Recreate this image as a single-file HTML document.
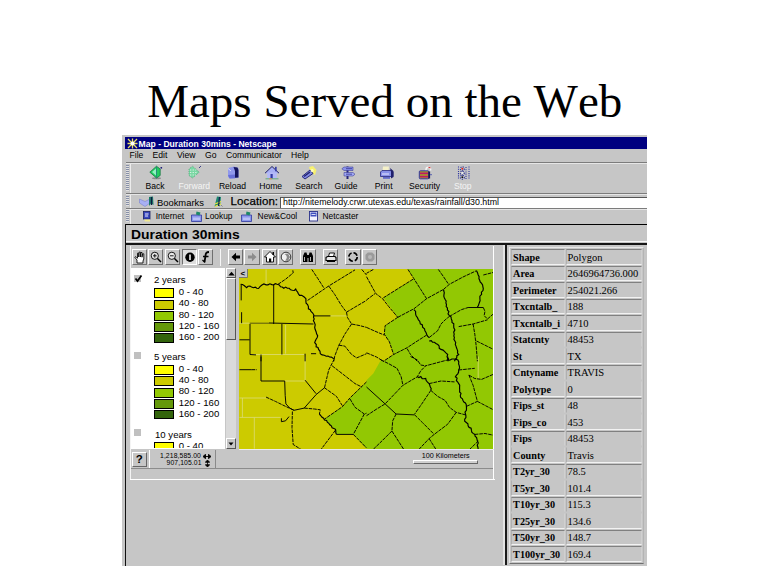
<!DOCTYPE html>
<html>
<head>
<meta charset="utf-8">
<title>Maps Served on the Web</title>
<style>
html,body{margin:0;padding:0;background:#fff;}
body{width:768px;height:576px;position:relative;overflow:hidden;font-family:"Liberation Sans",sans-serif;color:#000;}
body *{position:absolute;box-sizing:border-box;}
.t{white-space:nowrap;line-height:1;}
#title{left:147.2px;top:74.3px;font:47.0px "Liberation Serif",serif;font-kerning:none;}
.g{background:#c6c6c6;}
.menu{top:151px;font-size:8.6px;}
.tb{top:182px;font-size:8.6px;transform:translateX(-50%);}
.pt{top:212.2px;font-size:8.4px;}
.ln{height:1px;left:126px;width:521px;}
.btn{width:15.4px;height:16.2px;top:249.3px;background:#c6c6c6;border-top:1px solid #fff;border-left:1px solid #fff;border-bottom:1px solid #707070;border-right:1px solid #707070;}
.btn svg{left:0;top:0;}
.sw{left:153.9px;width:20.4px;height:10px;border:1px solid #000;}
.lg{left:178.7px;font-size:9.6px;}
.cb{left:134px;width:7.2px;height:7px;background:#c0c0c0;}
table{left:509.3px;top:247.4px;width:133.6px;table-layout:fixed;border-collapse:separate;border-spacing:1px;border-top:1px solid #e8e8e8;border-left:1px solid #e8e8e8;border-bottom:1px solid #707070;border-right:1px solid #b4b4b4;font:10.2px "Liberation Serif",serif;}
tbody,tr,td,th{position:static !important;}
td,th{height:15.5px;padding:0 0 0 0.8px;line-height:13px;text-align:left;white-space:nowrap;border-top:1px solid #808080;border-left:1px solid #b0b0b0;border-bottom:1px solid #f2f2f2;border-right:1px solid #d0d0d0;overflow:hidden;}
tr.nb td,tr.nb th{border-bottom-color:#c6c6c6;}
tr.nt td,tr.nt th{border-top-color:#c6c6c6;}
th{width:54px;font-weight:bold;}
td{width:75.6px;font-size:10.5px;padding-left:0.2px;}
</style>
</head>
<body>
<div id="title" class="t">Maps Served on the Web</div>

<!-- window chrome -->
<div class="g" style="left:122px;top:135.2px;width:525px;height:430.6px;"></div>
<div style="left:124.8px;top:224px;width:1.4px;height:341.8px;background:#101010;"></div>
<div style="left:124.9px;top:137px;width:522.1px;height:12px;background:#000080;"></div>
<div style="left:129.7px;top:163px;width:1px;height:61px;background:#ececec;"></div>
<svg style="left:126.5px;top:137.5px" width="11" height="11" viewBox="0 0 11 11"><path d="M1,1L10,10M10,1L1,10M5.5,0.5V10.5M0.5,5.5H10.500" stroke="#e8e060" stroke-width="1.3"/><circle cx="5.500" cy="5.5" r="2" fill="#fff"/></svg>
<span class="t" style="left:138.6px;top:139px;font:bold 8.6px 'Liberation Sans',sans-serif;color:#fff;">Map - Duration 30mins - Netscape</span>

<span class="t menu" style="left:129.5px">File</span>
<span class="t menu" style="left:152.5px">Edit</span>
<span class="t menu" style="left:177px">View</span>
<span class="t menu" style="left:205px">Go</span>
<span class="t menu" style="left:226px">Communicator</span>
<span class="t menu" style="left:291px">Help</span>
<div class="ln" style="top:162px;background:#7c7c7c"></div>
<div class="ln" style="top:163px;background:#e6e6e6"></div>

<!-- grips -->
<div style="left:126px;top:165px;width:3px;height:26px;background:repeating-linear-gradient(#8890a8 0 1px,#e0e0e0 1px 2px);"></div>
<div style="left:126px;top:196px;width:3px;height:10px;background:repeating-linear-gradient(#8890a8 0 1px,#e0e0e0 1px 2px);"></div>
<div style="left:126px;top:210px;width:3px;height:12px;background:repeating-linear-gradient(#8890a8 0 1px,#e0e0e0 1px 2px);"></div>

<!-- toolbar icons -->
<svg style="left:148px;top:165px" width="330" height="16" viewBox="0 0 330 16">
  <!-- back -->
  <ellipse cx="8.500" cy="13.300" rx="4.500" ry="1" fill="#8a8a8a"/>
  <path d="M1.800,7.200L8.500,1.200L12.200,4V10.500L8.500,13Z" fill="#22cc60" stroke="#0c7038" stroke-width="0.700"/><path d="M4,7L8.500,3V11Z" fill="#90f0c0"/><path d="M8.500,1.500V13" stroke="#208878" stroke-width="0.900"/><rect x="12.500" y="2" width="1.600" height="1.600" fill="#202078"/>
  <!-- forward -->
  <g transform="translate(39,0)"><path d="M12.200,7.200L5.500,1.200L2,4V10.500L5.500,13Z" fill="#7ad8a4" stroke="#48a070" stroke-width="0.700" stroke-dasharray="1.200 1"/><path d="M3,5H9M3,7.500H10M3,10H9" stroke="#d8f0e0" stroke-width="1.100" stroke-dasharray="1.300 1.300"/><path d="M12,3L14,1" stroke="#303080" stroke-width="0.900"/></g>
  <!-- reload -->
  <g transform="translate(78,0)"><path d="M2,3L8,1.500L12.500,3V13L4,13.500L2,12Z" fill="#9098ec"/><path d="M7.500,2L11.500,2.500L12.500,5V12.500L9,12.800V6Z" fill="#14145c"/><path d="M2,10L9,9.500V13.300L3.500,13.500Z" fill="#6870d8"/><path d="M2,3.500L5,6" stroke="#d8dcff" stroke-width="1"/></g>
  <!-- home -->
  <g transform="translate(116,0)"><path d="M1,8.200L8,1.500L15,8.200" fill="#a8b0f4" stroke="#202060" stroke-width="1"/><rect x="3.200" y="7.500" width="9.600" height="6" fill="#b4baf8"/><rect x="6.500" y="9" width="2.200" height="4.500" fill="#3038a0"/><rect x="11" y="1.800" width="1.700" height="4.500" fill="#3840a8"/><path d="M1.500,13.800H14.500" stroke="#58a878" stroke-width="0.900"/><path d="M5,13.800H8" stroke="#e89050" stroke-width="0.900"/></g>
  <!-- search -->
  <g transform="translate(153,0)"><path d="M8,2L12,1L15.500,5L14,10L10,8Z" fill="#f6f070"/><path d="M1,11.500L9,5L12,8.500L4,14Z" fill="#8088e4" stroke="#1c1c70" stroke-width="0.900"/><path d="M3,11.500L9,7" stroke="#20206c" stroke-width="1.300"/><circle cx="11.200" cy="5.500" r="1.500" fill="#fffcc0"/></g>
  <!-- guide -->
  <g transform="translate(192,0)"><rect x="6.500" y="1.500" width="2" height="12.500" fill="#242478"/><path d="M4,2H13V5.500H4L1.800,3.800Z" fill="#8c94ec" stroke="#2c2c88" stroke-width="0.500"/><path d="M13,7.500H4V11H13L15,9.200Z" fill="#a0a8f4" stroke="#2c2c88" stroke-width="0.500"/><path d="M6,3.700H12M6,9.200H12" stroke="#303090" stroke-width="0.800"/></g>
  <!-- print -->
  <g transform="translate(231,0)"><path d="M4,1.500H10L9.500,6H3.500Z" fill="#f4f0c8"/><path d="M1.500,7L3,5.500H12L14,7V11.500H1.500Z" fill="#8890e8" stroke="#24247c" stroke-width="0.800"/><path d="M11,3L14.500,6V12L12,13.500V7Z" fill="#20206c"/><path d="M3,9H10" stroke="#e8eaff" stroke-width="1"/><path d="M4,12H11V13.800H4Z" fill="#6068c8"/></g>
  <!-- security -->
  <g transform="translate(270,0)"><path d="M8,7V4.500A2.300,2.300 0 0 1 12.600,4.500V5.500" fill="none" stroke="#f4f4f4" stroke-width="1.500"/><path d="M10.500,2.300L12.500,3" stroke="#d03030" stroke-width="1.100"/><rect x="1.300" y="5.800" width="9.500" height="8" rx="1" fill="#a0a028" stroke="#2828a8" stroke-width="0.900"/><rect x="2" y="7.500" width="8" height="1.700" fill="#c01868"/><rect x="2" y="10.800" width="8" height="1.700" fill="#c01868"/><rect x="10.300" y="6.500" width="1.800" height="7" fill="#181850"/><rect x="12" y="9.200" width="2" height="1" fill="#5860b0"/></g>
  <!-- stop -->
  <g transform="translate(309,0)"><g stroke-dasharray="1.100 1.100" fill="none" stroke-width="1.100"><path d="M1.500,1.500V14.500M12,1.500V14.500M9,2V14" stroke="#3038a0"/><circle cx="5.300" cy="3.800" r="2" stroke="#283090"/><circle cx="5.300" cy="8" r="2" stroke="#283090"/><circle cx="5.300" cy="12.200" r="2" stroke="#283090"/></g><circle cx="5.300" cy="3.800" r="1" fill="#e02020"/><circle cx="5.300" cy="8" r="0.900" fill="#f0f0f0"/><circle cx="5.300" cy="12.200" r="0.900" fill="#101010"/></g>
</svg>
<span class="t tb" style="left:155px">Back</span>
<span class="t tb" style="left:194.3px;color:#f4f4f4">Forward</span>
<span class="t tb" style="left:232.500px">Reload</span>
<span class="t tb" style="left:270.700px">Home</span>
<span class="t tb" style="left:308.800px">Search</span>
<span class="t tb" style="left:346px">Guide</span>
<span class="t tb" style="left:383.700px">Print</span>
<span class="t tb" style="left:424.600px">Security</span>
<span class="t tb" style="left:462.800px;color:#f4f4f4">Stop</span>
<div class="ln" style="top:193px;background:#7c7c7c"></div>
<div class="ln" style="top:194px;background:#e6e6e6"></div>

<!-- location bar -->
<svg style="left:138.500px;top:195.500px" width="17" height="12" viewBox="0 0 17 12"><path d="M0.500,3L6,5.500L11,3V7L6,10.500L0.500,7Z" fill="#a8b0f4" stroke="#7078c8" stroke-width="0.500"/><path d="M10,1L14,0.500L14.500,9L12,7.500L10,10Z" fill="#1c7868"/><path d="M12.500,1V9" stroke="#101840" stroke-width="1.200"/></svg>
<span class="t" style="left:157px;top:197.5px;font-size:9.4px">Bookmarks</span>
<svg style="left:213px;top:195.500px" width="11" height="12" viewBox="0 0 11 12"><path d="M4,0.500L8,1L7,10.500L4.500,9L1.500,10.500Z" fill="#1c8870"/><path d="M2,8L8,5.500M2,10.500L8,8" stroke="#f0e838" stroke-width="1.300"/><path d="M6.500,1L5.500,10" stroke="#182050" stroke-width="1.200"/><path d="M8,9L9.500,10.500" stroke="#888" stroke-width="1"/></svg>
<span class="t" style="left:230.6px;top:195.6px;font-size:11.5px;letter-spacing:0.1px;-webkit-text-stroke:0.25px #000">Location:</span>
<div style="left:279.5px;top:196.5px;width:367.5px;height:11px;background:#fff;border-top:1px solid #555;border-left:1px solid #555;"></div>
<span class="t" style="left:283px;top:198px;font-size:8.800px">http://nitemelody.crwr.utexas.edu/texas/rainfall/d30.html</span>
<div class="ln" style="top:207.500px;background:#7c7c7c"></div>
<div class="ln" style="top:208.500px;background:#e6e6e6"></div>

<!-- personal toolbar -->
<svg style="left:142.500px;top:211px" width="8" height="11" viewBox="0 0 8 11"><rect x="0.500" y="0.500" width="6.500" height="7.500" fill="#3848c0" stroke="#182060" stroke-width="0.8"/><path d="M2,3H5.500M2,5H5" stroke="#fff" stroke-width="0.9"/><path d="M1,8.500H7V10.500H2Z" fill="#f0e890"/></svg>
<span class="t pt" style="left:155.800px">Internet</span>
<svg style="left:190.500px;top:210.500px" width="11" height="11" viewBox="0 0 11 11"><path d="M0.500,4H10.500V10.500H0.500Z" fill="#8c98ec" stroke="#3038a0" stroke-width="0.8"/><path d="M2,6.500H9V9H2Z" fill="#b8c0f8"/><path d="M5.500,0.500L9.500,1.500L8.500,4.500L5,3.500Z" fill="#1c8868"/></svg>
<span class="t pt" style="left:205px">Lookup</span>
<svg style="left:240.500px;top:210.500px" width="11" height="11" viewBox="0 0 11 11"><path d="M0.500,4H10.500V10.500H0.500Z" fill="#8c98ec" stroke="#3038a0" stroke-width="0.8"/><path d="M2,6.500H9V9H2Z" fill="#b8c0f8"/><path d="M5.500,0.500L9.500,1.500L8.500,4.500L5,3.500Z" fill="#1c8868"/></svg>
<span class="t pt" style="left:257.600px">New&amp;Cool</span>
<svg style="left:309px;top:211px" width="9" height="11" viewBox="0 0 9 11"><rect x="0.500" y="0.500" width="8" height="9.500" fill="#f4f4ff" stroke="#283088" stroke-width="0.9"/><rect x="1.500" y="1.500" width="6" height="4" fill="#4050c0"/><path d="M2.500,3.500H6.500" stroke="#fff" stroke-width="0.8"/></svg>
<span class="t pt" style="left:322.500px">Netcaster</span>
<div class="ln" style="top:223.600px;background:#000;height:1.600px;left:125.600px;width:521.400px"></div>

<!-- heading frame -->
<span class="t" style="left:131px;top:226.800px;font:bold 12.800px 'Liberation Sans',sans-serif;transform-origin:0 0;transform:scaleX(1.085);">Duration 30mins</span>
<div class="ln" style="top:240.600px;background:#f6f6f6;height:1.400px;left:125.600px;width:521.400px"></div>
<div class="ln" style="top:242.500px;background:#151515;height:2.200px;left:125.600px;width:521.400px"></div>

<!-- frame divider -->
<div style="left:493.200px;top:246px;width:1.300px;height:233.600px;background:#fff;"></div>
<div style="left:130px;top:246px;width:1.200px;height:233.600px;background:#f4f4f4;"></div>
<div style="left:130px;top:478.800px;width:364.500px;height:1.300px;background:#fff;"></div>
<div style="left:503px;top:244.700px;width:2px;height:320.800px;background:#e4e4e4;"></div>
<div style="left:505px;top:244.700px;width:2.300px;height:320.800px;background:#1c1c1c;"></div>

<!-- applet toolbar buttons -->
<div class="btn" style="left:131.600px"><svg width="14" height="14" viewBox="0 0 14 14"><path d="M4,13V10L1.800,7.300L2.900,6.600L4.500,8.300V3.200H5.700V7L6.100,2.100H7.300V7L7.800,2.500H9V7.200L9.600,3.800H10.800V9L10,11V13Z" fill="#fff" stroke="#000" stroke-width="0.850" stroke-linejoin="round"/></svg></div>
<div class="btn" style="left:147.700px"><svg width="14" height="14" viewBox="0 0 14 14"><circle cx="5.800" cy="5.800" r="3.600" fill="#e8e8e8" stroke="#000" stroke-width="0.900"/><path d="M4,5.800H7.600M5.800,4V7.600" stroke="#000" stroke-width="0.900"/><path d="M8.500,8.500L12,12" stroke="#000" stroke-width="1.500"/></svg></div>
<div class="btn" style="left:164.600px"><svg width="14" height="14" viewBox="0 0 14 14"><circle cx="5.800" cy="5.800" r="3.600" fill="#e8e8e8" stroke="#000" stroke-width="0.900"/><path d="M4,5.800H7.600" stroke="#000" stroke-width="0.900"/><path d="M8.500,8.500L12,12" stroke="#000" stroke-width="1.500"/></svg></div>
<div class="btn" style="left:181.500px;background:#dedede;border-color:#707070 #fff #fff #707070"><svg width="14" height="14" viewBox="0 0 14 14"><circle cx="7" cy="7.200" r="4.700" fill="#000"/><path d="M7,4.500V10" stroke="#fff" stroke-width="1.500"/></svg></div>
<div class="btn" style="left:197.600px"><svg width="14" height="14" viewBox="0 0 14 14"><path d="M10,2C7,2 6.500,4 6.500,6L5.500,12" fill="none" stroke="#000" stroke-width="1.800"/><path d="M4,6.500H9.500" stroke="#000" stroke-width="1.500"/><path d="M3.500,10L6,12.500" stroke="#000" stroke-width="1.200"/></svg></div>
<div style="left:220px;top:249px;width:1.200px;height:17px;background:#f6f6f6;"></div>
<div class="btn" style="left:228px"><svg width="14" height="14" viewBox="0 0 14 14"><path d="M2.500,7L7,2.800V5.500H11V8.500H7V11.200Z" fill="#000"/></svg></div>
<div class="btn" style="left:244.300px"><svg width="14" height="14" viewBox="0 0 14 14"><path d="M11.500,7L7,2.800V5.500H3V8.500H7V11.200Z" fill="#8c8c8c"/></svg></div>
<div class="btn" style="left:261.600px"><svg width="14" height="14" viewBox="0 0 14 14"><path d="M1.500,7L7,1.500L12.500,7H10.500V12H3.500V7Z" fill="#fff" stroke="#000" stroke-width="0.900"/><rect x="6" y="8.500" width="2.200" height="3.500" fill="#000"/><rect x="9.500" y="2" width="1.500" height="3" fill="#000"/></svg></div>
<div class="btn" style="left:277.800px"><svg width="14" height="14" viewBox="0 0 14 14"><circle cx="7" cy="7" r="4.800" fill="#f0f0f0" stroke="#222" stroke-width="0.900"/><path d="M5,4C8,5 9,8 6,10.500L9,11L11,7L9,3.500Z" fill="#888"/></svg></div>
<div class="btn" style="left:300.400px"><svg width="14" height="14" viewBox="0 0 14 14"><path d="M2,12V6L3.500,2.500H5.500L6.500,6V12ZM7.500,12V6L8.500,2.500H10.500L12,6V12Z" fill="#000"/><rect x="6" y="5" width="2" height="3" fill="#000"/><path d="M3.500,7V11M9.500,7V11" stroke="#fff" stroke-width="0.700"/></svg></div>
<div class="btn" style="left:322.800px"><svg width="14" height="14" viewBox="0 0 14 14"><path d="M4.500,6.500L5.500,3H10.500L9.500,6.500" fill="#fff" stroke="#000" stroke-width="0.900"/><path d="M2,7.500L3.500,6.500H11L12,7.500V10.500H2Z" fill="#e8e8e8" stroke="#000" stroke-width="1.100"/><path d="M3,11.500H11" stroke="#000" stroke-width="1"/></svg></div>
<div class="btn" style="left:345.300px"><svg width="14" height="14" viewBox="0 0 14 14"><circle cx="7" cy="7" r="4.200" fill="none" stroke="#000" stroke-width="1.600" stroke-dasharray="4.600 2"/></svg></div>
<div class="btn" style="left:361.700px"><svg width="14" height="14" viewBox="0 0 14 14"><path d="M4.800,2.500H9.200L11.500,4.800V9.200L9.200,11.500H4.800L2.500,9.200V4.800Z" fill="#9a9a9a"/><circle cx="7" cy="7" r="2" fill="#b8b8b8"/></svg></div>

<!-- legend panel -->
<div style="left:131.200px;top:268px;width:94.300px;height:180.500px;background:#fff;overflow:hidden;">
</div>
<div class="cb" style="top:274.800px"></div>
<svg style="left:133.500px;top:273.500px" width="9" height="9" viewBox="0 0 9 9"><path d="M1.500,4.500L3.500,7L7.500,1.500" fill="none" stroke="#000" stroke-width="1.700"/></svg>
<span class="t lg" style="left:154px;top:275.400px">2 years</span>
<div class="sw" style="top:288.200px;background:#ffff00"></div><span class="t lg" style="top:287.0px">0 - 40</span>
<div class="sw" style="top:299.500px;background:#cccb00"></div><span class="t lg" style="top:298.3px">40 - 80</span>
<div class="sw" style="top:310.700px;background:#92c803"></div><span class="t lg" style="top:309.5px">80 - 120</span>
<div class="sw" style="top:322px;background:#64980a"></div><span class="t lg" style="top:320.8px">120 - 160</span>
<div class="sw" style="top:333.200px;background:#33640c"></div><span class="t lg" style="top:332.0px">160 - 200</span>
<div class="cb" style="top:352.200px"></div>
<span class="t lg" style="left:154px;top:352.100px">5 years</span>
<div class="sw" style="top:365.200px;background:#ffff00"></div><span class="t lg" style="top:364.0px">0 - 40</span>
<div class="sw" style="top:376.400px;background:#cccb00"></div><span class="t lg" style="top:375.2px">40 - 80</span>
<div class="sw" style="top:387.600px;background:#92c803"></div><span class="t lg" style="top:386.4px">80 - 120</span>
<div class="sw" style="top:398.900px;background:#64980a"></div><span class="t lg" style="top:397.7px">120 - 160</span>
<div class="sw" style="top:410.100px;background:#33640c;height:9.400px"></div><span class="t lg" style="top:408.9px">160 - 200</span>
<div class="cb" style="top:429px"></div>
<span class="t lg" style="left:155px;top:430.300px">10 years</span>
<div class="sw" style="top:442.200px;background:#ffff00;height:6.300px;border-bottom:none"></div>
<div style="left:178px;top:440.200px;width:40px;height:8.300px;overflow:hidden"><span class="t lg" style="left:0.700px;top:0.600px">0 - 40</span></div>

<!-- scrollbar -->
<div style="left:225.500px;top:268px;width:10.500px;height:180.500px;background:#dadada;"></div>
<div style="left:225.500px;top:268px;width:10.500px;height:10px;background:#c6c6c6;border:1px solid;border-color:#fff #555 #555 #fff;"></div>
<svg style="left:227.500px;top:270.500px" width="7" height="5" viewBox="0 0 7 5"><path d="M0.300,4.500L3.500,0.800L6.700,4.500Z" fill="#000"/></svg>
<div style="left:225.500px;top:278px;width:10.500px;height:61.500px;background:#c6c6c6;border:1px solid;border-color:#fff #555 #555 #fff;"></div>
<div style="left:225.500px;top:438px;width:10.500px;height:10.500px;background:#c6c6c6;border:1px solid;border-color:#fff #555 #555 #fff;"></div>
<svg style="left:228px;top:441.500px" width="6" height="4" viewBox="0 0 6 4"><path d="M0.500,0.500L3,3.600L5.500,0.500Z" fill="#000"/></svg>
<div style="left:236px;top:268px;width:2.500px;height:181px;background:#c6c6c6"></div>

<svg id="map" style="left:238.5px;top:268.5px" width="254.5" height="180.0" viewBox="0 0 254.5 180.0">
<rect width="254.5" height="180.0" fill="#cccb00"/>
<polygon fill="#92c803" points="169.0,0.5 174.9,9.7 144.4,28.8 158.8,48.3 146.1,56.7 145.3,65.2 150.4,72.8 154.6,85.5 144.4,92.3 141.9,90.9 134.3,104.4 127.5,111.2 127.5,112.9 110.9,129.0 103.3,137.8 85.5,150.1 92.3,156.9 96.5,160.3 97.4,165.4 114.3,165.4 127.5,179.7 256.5,182.0 256.5,-2.0 169.0,-2.0"/>
<g fill="none" stroke="#dcdc78" stroke-width="0.8">
<polyline points="27.1,0.5 27.1,15.3"/>
<polyline points="0.5,54.2 10.7,54.2"/>
<polyline points="91.4,46.9 107.5,46.9"/>
<polyline points="46.6,55.9 46.6,84.7"/>
<polyline points="11.0,85.5 65.2,85.5"/>
<polyline points="0.5,129.0 27.1,129.0"/>
<polyline points="0.5,148.4 41.5,148.4"/>
<polyline points="15.3,148.4 15.3,179.7"/>
<polyline points="66.1,87.5 66.1,111.2"/>
<polyline points="45.7,112.0 66.1,112.0"/>
<polyline points="3.4,129.0 3.4,148.4"/>
<polyline points="239.2,87.5 239.2,109.5"/>
</g>
<g fill="none" stroke="#4a4a10" stroke-width="0.9">
<polyline points="10.7,54.2 30.0,54.2"/>
</g>
<g fill="none" stroke="#000" stroke-width="0.95">
<polyline points="34.7,15.8 34.7,55.0"/>
<polyline points="30.0,54.0 74.5,55.0"/>
<polyline points="2.2,15.3 2.2,31.4"/>
<polyline points="2.6,43.2 2.6,54.2"/>
<polyline points="11.0,55.0 11.0,85.5 17.0,85.9"/>
<polyline points="0.5,70.8 10.7,70.8"/>
<polyline points="42.9,55.0 42.9,85.5"/>
<polyline points="22.0,85.5 22.0,92.3"/>
<polyline points="66.1,84.7 66.1,92.3"/>
<polyline points="72.0,84.7 77.1,84.7"/>
<polyline points="74.5,46.9 91.4,46.9"/>
<polyline points="229.1,38.5 244.3,38.5"/>
<polyline points="22.0,87.5 22.0,112.0 45.7,112.0"/>
<polyline points="0.5,100.7 12.7,100.7"/>
<polyline points="45.7,112.0 46.2,126.4 46.9,134.9 50.8,139.1 55.0,141.3"/>
<polyline points="55.0,141.3 65.2,139.1 77.1,125.6 85.5,118.8"/>
<polyline points="66.1,111.2 77.1,124.7"/>
<polyline points="42.4,149.3 42.4,152.7 46.6,151.8 50.0,147.6"/>
<polyline points="97.4,165.4 114.3,165.4"/>
<polyline points="127.5,118.0 146.1,134.9 157.1,145.0"/>
<polyline points="157.1,145.0 175.7,145.9"/>
</g><g fill="none" stroke="#000" stroke-width="0.95" stroke-dasharray="3.6 0.9">
<polyline points="39.0,15.3 46.6,10.2 54.2,3.9 53.7,0.5"/>
<polyline points="72.8,0.5 78.7,9.3 84.7,18.7"/>
<polyline points="68.6,31.4 89.7,17.0 116.0,0.9"/>
<polyline points="89.7,17.0 95.7,25.4 102.4,36.4 107.5,43.2"/>
<polyline points="107.5,43.2 116.0,38.1 127.5,31.4"/>
<polyline points="107.5,43.2 108.4,48.3 112.6,55.0 121.1,56.7 127.5,58.4"/>
<polyline points="112.6,55.0 105.8,65.2 99.9,76.2 95.7,87.2 94.8,92.3"/>
<polyline points="99.9,76.2 105.8,77.1 112.6,85.5 117.7,88.9 127.5,84.7"/>
<polyline points="122.8,0.5 127.5,6.0"/>
<polyline points="169.0,0.5 174.9,9.7 181.7,20.4 187.6,29.7"/>
<polyline points="127.5,7.7 136.8,24.6 143.6,29.7 149.5,37.3 158.8,48.3"/>
<polyline points="127.5,31.0 136.0,24.6"/>
<polyline points="134.3,0.5 127.5,4.3"/>
<polyline points="144.4,28.8 159.7,19.2 174.9,9.7"/>
<polyline points="158.8,48.3 146.1,56.7 145.3,65.2 150.4,72.8 154.6,85.5"/>
<polyline points="158.8,48.3 174.9,39.8 187.6,29.7 204.5,20.4 210.4,15.3 224.0,8.0 237.5,1.7"/>
<polyline points="199.4,0.5 204.5,7.7 209.6,15.3"/>
<polyline points="190.1,68.6 198.6,61.8 202.0,55.0 206.2,50.8 210.4,47.4"/>
<polyline points="187.6,66.1 178.3,72.0 168.1,78.7 154.6,85.5 144.4,92.3"/>
<polyline points="168.1,79.6 171.5,85.5 178.3,92.3"/>
<polyline points="127.5,58.4 136.0,62.2 145.3,66.1"/>
<polyline points="127.5,83.8 137.7,88.1 144.4,92.3"/>
<polyline points="244.3,6.0 254.4,3.4"/>
<polyline points="210.4,47.4 222.3,40.7 229.1,38.5"/>
<polyline points="244.3,38.5 246.0,42.4 245.1,46.6 248.5,50.0 254.4,44.9"/>
<polyline points="219.7,57.6 234.1,55.0 248.5,50.8"/>
<polyline points="234.1,55.0 235.8,65.2 237.2,77.1 238.4,92.3"/>
<polyline points="237.5,72.0 246.0,76.2 254.4,80.4"/>
<polyline points="12.7,100.7 17.8,100.7"/>
<polyline points="27.1,128.1 36.4,132.4 46.6,137.4 55.0,141.3"/>
<polyline points="85.5,118.8 88.1,107.8 89.7,101.0 95.7,89.2"/>
<polyline points="53.4,142.5 53.0,158.6 54.2,175.5 61.8,180.3"/>
<polyline points="65.2,139.1 75.4,140.0 81.3,140.8 80.4,145.0"/>
<polyline points="85.5,118.8 97.4,127.3 103.3,136.6"/>
<polyline points="93.1,96.8 104.1,105.3 116.0,114.6 122.8,118.0"/>
<polyline points="127.5,112.9 110.9,129.0 103.3,137.8 85.5,150.1"/>
<polyline points="110.9,129.8 116.0,138.3 125.3,145.0 127.5,144.2"/>
<polyline points="125.3,145.0 114.3,165.4"/>
<polyline points="114.3,165.4 127.5,178.9"/>
<polyline points="96.5,161.1 88.9,171.3 82.1,180.3"/>
<polyline points="141.9,90.9 149.5,94.6 158.0,99.3 162.2,107.8 163.9,116.3"/>
<polyline points="127.5,146.7 137.7,140.0 146.1,134.9 163.9,116.3 178.3,107.8 181.7,101.9 186.7,96.8 208.7,90.9"/>
<polyline points="171.5,87.5 178.3,90.9 181.7,96.0 186.7,96.8"/>
<polyline points="191.8,121.4 183.4,134.0 175.7,145.0"/>
<polyline points="190.1,114.6 202.0,112.0 215.5,112.9"/>
<polyline points="191.8,121.4 198.6,127.3 206.2,131.5 210.4,138.3 217.2,143.4 226.5,145.9"/>
<polyline points="157.1,145.0 153.7,151.8 152.9,162.0 143.6,171.3 134.3,180.3"/>
<polyline points="152.9,162.0 164.7,180.3"/>
<polyline points="175.7,145.9 183.4,153.5 195.2,165.4"/>
<polyline points="217.2,143.4 208.7,155.2 195.2,165.4 190.1,169.6 180.0,180.3"/>
<polyline points="190.1,169.6 196.9,180.3"/>
<polyline points="219.7,101.0 235.8,99.3"/>
<polyline points="229.9,106.1 235.8,109.5 242.6,110.4 254.4,105.3"/>
<polyline points="229.9,106.1 234.1,116.3 238.4,132.4 227.4,137.4"/>
<polyline points="238.4,132.4 254.4,140.8"/>
<polyline points="235.8,165.4 246.0,164.5 254.4,166.2"/>
<polyline points="239.2,172.1 230.7,180.3"/>
</g><g fill="none" stroke="#000" stroke-width="1.15" stroke-linejoin="miter">
<polyline points="1.7,15.3 3.5,15.5 5.1,16.5 7.7,18.7 9.0,17.2 11.0,17.0 12.6,18.1 14.4,18.7 16.3,18.1 17.8,19.3 19.5,19.5 21.0,17.6 22.9,16.1 24.9,15.0 27.1,15.8 29.0,15.8 30.9,14.8 32.8,15.6 34.7,15.8 36.3,14.6 38.1,15.3 40.3,15.9 41.5,17.8 43.2,18.0 44.8,19.2 46.7,18.1 48.3,19.2 50.2,19.3 51.6,20.8 53.4,21.2 55.4,21.5 56.7,20.0 57.4,21.6 58.6,23.0 59.3,24.6 60.5,26.3 62.7,26.3 65.2,28.0 66.9,29.7 66.9,32.2 67.1,34.2 68.6,35.6 69.4,37.6 69.4,39.8 71.2,40.6 72.0,42.4 73.7,44.0 74.9,46.0 74.5,48.3 75.2,49.9 74.4,51.8 75.4,53.4 76.2,55.9 75.7,58.4 76.2,60.6 77.1,62.7 77.6,64.9 78.7,66.9 78.1,68.7 77.1,70.3 76.3,71.9 75.7,73.7 77.3,75.5 77.1,77.9 79.0,78.5 79.6,80.4 81.0,82.3 81.3,84.7 83.1,85.9 85.3,86.2 87.2,87.2 89.0,87.1 90.6,88.0 92.3,88.1 94.8,89.7"/>
<polyline points="204.5,20.4 204.8,22.0 205.3,23.7 205.0,25.4 204.8,27.3 205.4,28.9 206.2,30.5 207.2,32.1 206.9,33.9 207.5,35.6 207.2,37.5 208.4,39.0 208.4,41.0 209.9,42.7 209.0,44.9 210.4,46.6 212.0,47.9 212.3,49.9 213.0,51.7 213.0,53.5 214.8,54.8 214.7,56.7 214.8,58.9 215.9,60.9 214.7,63.1 215.2,65.2 214.8,67.0 215.4,68.6 214.9,70.4 215.9,72.0 216.7,73.6 216.3,75.5 217.0,77.1 217.5,78.8 218.1,80.4 218.7,82.1 218.5,84.0 219.7,85.5 217.9,86.7 217.7,88.9 216.3,90.4 215.5,92.3"/>
<polyline points="174.9,40.7 176.6,42.4 176.6,44.9 177.1,46.8 178.3,48.3 179.3,50.6 180.8,52.5 181.3,54.8 183.4,55.9 183.6,58.1 185.5,59.7 185.9,61.8 187.0,63.4 187.6,65.2 188.6,67.1 190.1,68.6"/>
<polyline points="190.1,72.0 192.2,71.7 193.5,73.2 195.4,73.2 196.9,74.5 198.8,75.5 200.1,76.9 200.3,79.3 202.0,80.4 204.1,81.1 205.7,82.6 207.2,84.1 208.7,85.5 208.0,87.8 209.6,90.0 208.7,92.3"/>
<polyline points="237.5,1.7 238.5,3.7 239.1,5.7 240.1,7.7 239.9,9.6 240.7,11.3 241.2,13.0 242.6,14.4 243.6,16.0 243.9,17.8 244.3,19.5 244.0,21.6 242.4,23.2 242.6,25.4 240.9,27.2 240.9,29.7 241.1,31.6 240.5,33.2 239.9,34.9 239.4,36.6 238.4,38.1"/>
<polyline points="80.4,145.0 81.7,146.5 82.8,148.1 84.6,149.2 85.5,151.0 87.6,151.4 88.3,153.2 89.8,154.3 90.8,155.8 92.3,156.9 93.1,158.8 94.9,159.5 96.5,160.3 96.8,162.0 96.8,163.7 97.4,165.4"/>
<polyline points="178.3,107.8 179.9,108.5 181.8,107.6 183.2,109.6 184.9,109.7 186.7,109.5 187.2,111.6 188.5,113.2 190.1,114.6 190.8,116.2 191.2,117.9 192.2,119.5 191.8,121.4"/>
<polyline points="208.7,87.5 208.7,90.9 210.8,91.2 212.8,90.0 214.8,90.0 216.9,90.3 218.9,90.9 219.8,92.9 219.6,94.9 220.3,96.9 220.6,98.9 219.7,101.0 219.6,103.1 218.8,104.8 217.5,106.2 216.4,107.8 218.1,109.1 217.4,111.5 218.7,113.0 219.7,114.6 220.7,116.2 220.6,117.9 220.6,119.6 220.7,121.3 220.6,123.0 222.0,124.4 221.3,126.7 221.7,128.5 223.4,129.8 224.0,131.5 224.9,133.0 226.4,134.0 227.2,135.5 227.4,137.4 227.5,139.4 227.4,141.3 226.0,143.1 226.5,145.0 226.9,146.9 226.9,148.6 225.7,150.1 225.7,152.2 227.3,153.5 228.9,154.9 229.1,156.9 230.1,158.4 232.1,159.1 232.4,161.2 232.8,163.2 234.1,164.4 235.8,165.4 236.1,167.2 237.6,168.6 238.0,170.3 238.4,172.1 239.3,174.1 238.2,176.3 238.9,178.2 239.2,180.3"/>
</g>
<rect x="0" y="0" width="8.5" height="8.5" fill="#c6c6c6"/><path d="M0,8.5H8.5V0" fill="none" stroke="#666" stroke-width="0.8"/>
<text x="1.6" y="7" font-family="Liberation Sans, sans-serif" font-weight="bold" font-size="8">&lt;</text>
</svg>

<!-- status row -->
<div style="left:238.500px;top:448.500px;width:255px;height:1.300px;background:#ececec"></div>
<div style="left:131.800px;top:451.600px;width:15px;height:15px;background:#c6c6c6;border:1px solid;border-color:#fff #666 #666 #fff;"></div>
<span class="t" style="left:135.800px;top:453.300px;font:bold 11.500px 'Liberation Sans',sans-serif">?</span>
<div style="left:148.600px;top:450px;width:1px;height:18px;background:#fff"></div>
<div style="left:215.300px;top:450px;width:1px;height:18px;background:#8a8a8a"></div>
<span class="t" style="left:160px;top:452.600px;font-size:6.800px;letter-spacing:0.100px">1,218,585.00</span><svg style="left:202.500px;top:453.800px" width="8" height="5" viewBox="0 0 8 5"><path d="M0,2.500L2.500,0.300V4.700ZM8,2.500L5.500,0.300V4.700ZM2,2.500H6" fill="#000" stroke="#000" stroke-width="0.900"/></svg>
<span class="t" style="left:166.500px;top:459.800px;font-size:6.800px;letter-spacing:0.100px">907,105.01</span><svg style="left:204.500px;top:459.600px" width="5" height="7" viewBox="0 0 5 7"><path d="M2.500,0L0.300,2.300H4.700ZM2.500,7L0.300,4.700H4.700ZM2.500,2V5" fill="#000" stroke="#000" stroke-width="0.800"/></svg>
<span class="t" style="left:421.700px;top:452.300px;font-size:7.200px">100 Kilometers</span>
<div style="left:413px;top:459.800px;width:64.500px;height:4.600px;background:#d0d0d0;border:1px solid;border-color:#fff #666 #666 #fff;"></div>
<div style="left:131.200px;top:467.800px;width:362px;height:1px;background:#8c8c8c"></div>

<!-- attribute table -->
<table>
<tr><th>Shape</th><td>Polygon</td></tr>
<tr><th>Area</th><td>2646964736.000</td></tr>
<tr><th>Perimeter</th><td>254021.266</td></tr>
<tr><th>Txcntalb_</th><td>188</td></tr>
<tr><th>Txcntalb_i</th><td>4710</td></tr>
<tr class="nb"><th>Statcnty</th><td>48453</td></tr>
<tr class="nt"><th>St</th><td>TX</td></tr>
<tr class="nb"><th>Cntyname</th><td>TRAVIS</td></tr>
<tr class="nt"><th>Polytype</th><td>0</td></tr>
<tr class="nb"><th>Fips_st</th><td>48</td></tr>
<tr class="nt"><th>Fips_co</th><td>453</td></tr>
<tr class="nb"><th>Fips</th><td>48453</td></tr>
<tr class="nt"><th>County</th><td>Travis</td></tr>
<tr class="nb"><th>T2yr_30</th><td>78.5</td></tr>
<tr class="nt"><th>T5yr_30</th><td>101.4</td></tr>
<tr class="nb"><th>T10yr_30</th><td>115.3</td></tr>
<tr class="nt"><th>T25yr_30</th><td>134.6</td></tr>
<tr><th>T50yr_30</th><td>148.7</td></tr>
<tr><th>T100yr_30</th><td>169.4</td></tr>
</table>
</body>
</html>
